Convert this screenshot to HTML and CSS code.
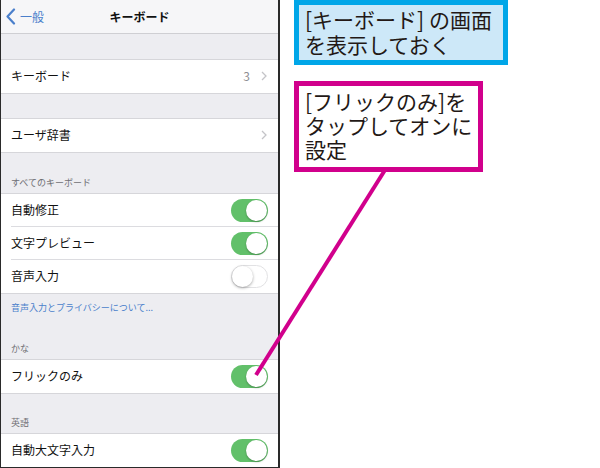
FILE: index.html
```html
<!DOCTYPE html>
<html lang="ja">
<head>
<meta charset="utf-8">
<link rel="stylesheet" href="styles.css">
</head>
<body>
<div class="page">
  <div class="phone">
    <div class="nav">
      <div class="back">
        <svg class="back-chev" width="11" height="17" viewBox="0 0 11 17"><path d="M9 1.5 L2.5 8.5 L9 15.5" fill="none" stroke="#4a7fcb" stroke-width="2.2" stroke-linecap="round" stroke-linejoin="round"/></svg>
        <span>一般</span>
      </div>
      <div class="title">キーボード</div>
    </div>
    <div class="gap g1"></div>
    <div class="group">
      <div class="row"><span>キーボード</span><span class="detail">3<svg class="chev" width="6" height="10" viewBox="0 0 6 10"><path d="M1 1 L5 5 L1 9" fill="none" stroke="#c4c4c8" stroke-width="1.3"/></svg></span></div>
    </div>
    <div class="gap g2"></div>
    <div class="group">
      <div class="row"><span>ユーザ辞書</span><span class="detail"><svg class="chev" width="6" height="10" viewBox="0 0 6 10"><path d="M1 1 L5 5 L1 9" fill="none" stroke="#c4c4c8" stroke-width="1.3"/></svg></span></div>
    </div>
    <div class="header h1">すべてのキーボード</div>
    <div class="group">
      <div class="row sep"><span>自動修正</span><span class="toggle on"><span class="knob"></span></span></div>
      <div class="row sep"><span>文字プレビュー</span><span class="toggle on"><span class="knob"></span></span></div>
      <div class="row"><span>音声入力</span><span class="toggle off"><span class="knob"></span></span></div>
    </div>
    <div class="footer">音声入力とプライバシーについて...</div>
    <div class="header h2">かな</div>
    <div class="group">
      <div class="row"><span>フリックのみ</span><span class="toggle on"><span class="knob"></span></span></div>
    </div>
    <div class="header h3">英語</div>
    <div class="group last">
      <div class="row"><span>自動大文字入力</span><span class="toggle on"><span class="knob"></span></span></div>
    </div>
  </div>
  <div class="notes">
    <div class="callout blue">[キーボード] の画面<br>を表示しておく</div>
    <div class="callout pink">[フリックのみ]を<br>タップしてオンに<br>設定</div>
  </div>
  <svg class="leader" width="600" height="468" viewBox="0 0 600 468"><line x1="385" y1="170" x2="256" y2="375" stroke="#d1008c" stroke-width="4"/></svg>
</div>
</body>
</html>
```
FILE: styles.css
```css
* { box-sizing: border-box; margin: 0; padding: 0; }
html, body { width: 600px; height: 468px; background: #fff; overflow: hidden; }
body { font-family: "Noto Sans CJK JP", "Noto Sans", sans-serif; color: #111; }
.page { position: relative; width: 600px; height: 468px; display: flex; }
.phone {
  width: 280px; height: 468px; background: #ededf1;
  border-left: 1px solid #2a2a2a; border-right: 2px solid #2a2a2a; border-bottom: 1px solid #2a2a2a;
  display: flex; flex-direction: column; overflow: hidden;
}
.nav {
  height: 34px; background: #f6f6f8; border-bottom: 1px solid #cfcfd3;
  display: flex; align-items: center; position: relative; flex-shrink: 0;
}
.back { display: flex; align-items: center; gap: 4px; padding-left: 4px; color: #4a7fcb; font-size: 12px; }
.back-chev { display: block; }
.title { position: absolute; left: 0; right: 0; text-align: center; font-size: 12px; font-weight: 700; pointer-events: none; }
.gap { flex-shrink: 0; }
.g1 { height: 25px; }
.g2 { height: 24px; }
.group { background: #fff; border-top: 1px solid #d6d6da; border-bottom: 1px solid #d6d6da; flex-shrink: 0; }
.row {
  height: 33px; display: flex; align-items: center; justify-content: space-between;
  padding: 0 10px 1px; font-size: 12px; line-height: 16px; position: relative;
}
.row.sep::after {
  content: ""; position: absolute; left: 10px; right: 0; bottom: 0; height: 1px; background: #dcdce0;
}
.detail { display: flex; align-items: center; gap: 11px; color: #8e8e93; font-size: 12px; padding-right: 1px; }
.chev { display: block; }
.header { font-size: 9px; line-height: 12px; color: #6f6f74; padding-left: 10px; display: flex; align-items: flex-end; padding-bottom: 4px; flex-shrink: 0; }
.h1 { height: 40px; }
.h2 { height: 22px; }
.h3 { height: 39px; }
.footer { font-size: 9px; line-height: 12px; color: #4a7fcb; padding: 8px 0 0 10px; height: 43px; flex-shrink: 0; }
.toggle {
  width: 37px; height: 23px; border-radius: 12px; display: flex; align-items: center; padding: 1px;
}
.toggle.on { background: #62c06a; justify-content: flex-end; }
.toggle.off { background: #fff; border: 1px solid #e2e2e4; justify-content: flex-start; padding: 0; }
.knob { width: 21px; height: 21px; border-radius: 50%; background: #fff; box-shadow: 0 1px 2px rgba(0,0,0,0.3); }
.toggle.off .knob { box-shadow: 0 1px 3px rgba(0,0,0,0.35); }
.notes { display: flex; flex-direction: column; padding-left: 14px; gap: 16px; }
.callout { font-size: 21px; line-height: 25px; color: #231815; }
.blue { width: 214px; height: 65px; background: #cde8f8; border: 5px solid #00a6e8; padding: 2px 0 0 6px; }
.pink { width: 189px; height: 91px; background: #fff; border: 5px solid #d1008c; padding: 3px 0 0 6px; line-height: 24px; }
.leader { position: absolute; left: 0; top: 0; pointer-events: none; }
```
